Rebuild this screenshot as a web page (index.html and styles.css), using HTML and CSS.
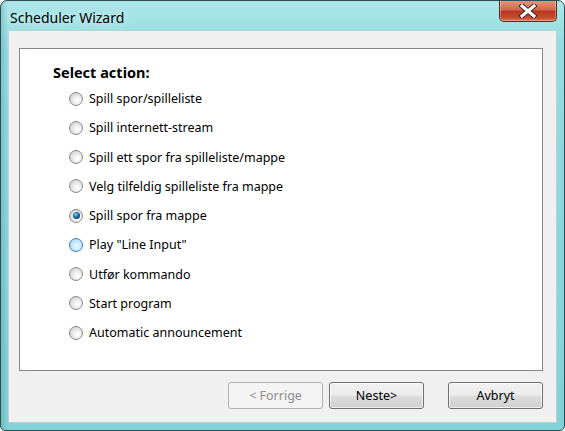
FILE: index.html
```html
<!DOCTYPE html>
<html lang="no">
<head>
  <meta charset="UTF-8">
  <title>Scheduler Wizard</title>
  <link rel="stylesheet" href="styles.css">
</head>
<body>
  <div class="window">
    <div class="titlebar">
      <span class="title">Scheduler Wizard</span>
      <div class="close">
        <svg width="20" height="14" viewBox="0 0 20 14">
          <path d="M4 2 L16 12 M16 2 L4 12" stroke="#3a2a28" stroke-width="5" stroke-linecap="square"/>
          <path d="M4 2 L16 12 M16 2 L4 12" stroke="#ffffff" stroke-width="3" stroke-linecap="square"/>
        </svg>
      </div>
    </div>

    <div class="client">
      <div class="panel">
        <h2 class="heading">Select action:</h2>
        <ul class="options">
          <li class="option"><span class="radio"></span>Spill spor/spilleliste</li>
          <li class="option"><span class="radio"></span>Spill internett-stream</li>
          <li class="option"><span class="radio"></span>Spill ett spor fra spilleliste/mappe</li>
          <li class="option"><span class="radio"></span>Velg tilfeldig spilleliste fra mappe</li>
          <li class="option"><span class="radio checked"></span>Spill spor fra mappe</li>
          <li class="option"><span class="radio hover"></span>Play "Line Input"</li>
          <li class="option"><span class="radio"></span>Utfør kommando</li>
          <li class="option"><span class="radio"></span>Start program</li>
          <li class="option"><span class="radio"></span>Automatic announcement</li>
        </ul>
      </div>

      <div class="buttons">
        <button class="btn" disabled>&lt; Forrige</button>
        <button class="btn">Neste&gt;</button>
        <button class="btn cancel">Avbryt</button>
      </div>
    </div>
  </div>
</body>
</html>
```

FILE: styles.css
```css
* {
  margin: 0;
  padding: 0;
  box-sizing: border-box;
}

body {
  font-family: 'Noto Sans', 'Open Sans', sans-serif;
  background: #ffffff;
  color: #000;
}

.window {
  position: relative;
  width: 565px;
  height: 431px;
  border: 1px solid #2f4c52;
  border-radius: 7px 7px 5px 5px;
  padding: 0 7px 7px 7px;
  display: flex;
  flex-direction: column;
  background:
    linear-gradient(90deg, rgba(70, 150, 158, 0.35) 0px, rgba(255, 255, 255, 0) 7px),
    linear-gradient(180deg, #ace6e8 0%, #95dde0 10%, #88d6da 60%, #80d2d6 100%);
  overflow: hidden;
}

.titlebar {
  height: 29px;
  display: flex;
  align-items: center;
  padding-left: 2px;
  padding-top: 3px;
}

.title {
  font-size: 14px;
  color: #000;
  text-shadow: 0 0 8px rgba(255, 255, 255, 0.9);
}

.close {
  position: absolute;
  top: -1px;
  right: 7px;
  width: 58px;
  height: 22px;
  border: 1px solid #5a2a22;
  border-top: none;
  border-radius: 0 0 5px 5px;
  background: linear-gradient(180deg, #e39a84 0%, #d06a4e 45%, #b8381f 55%, #c64c2e 85%, #d9795a 100%);
  box-shadow: inset 0 0 0 1px rgba(255, 255, 255, 0.3);
  display: flex;
  align-items: center;
  justify-content: center;
}

.client {
  flex: 1;
  background: #f0f0f0;
  border: 1px solid #b7d3d6;
  padding: 17px 13px 13px 10px;
  display: flex;
  flex-direction: column;
}

.panel {
  height: 323px;
  background: #ffffff;
  border: 1px solid #828790;
  padding: 15px 0 0 33px;
}

.heading {
  font-size: 14.5px;
  font-weight: 700;
  line-height: 16px;
}

.options {
  list-style: none;
  margin-top: 4px;
  padding-left: 16px;
}

.option {
  height: 29.25px;
  display: flex;
  align-items: center;
  gap: 6px;
  font-size: 12.5px;
}

.radio {
  width: 14px;
  height: 14px;
  border-radius: 50%;
  border: 1px solid #8a8b8b;
  background: radial-gradient(circle at 62% 62%, #ffffff 0%, #eeeeee 35%, #c4c4c4 100%);
  display: flex;
  align-items: center;
  justify-content: center;
  flex-shrink: 0;
}

.radio.checked::after {
  content: "";
  width: 7px;
  height: 7px;
  border-radius: 50%;
  background: radial-gradient(circle at 40% 35%, #8fd0f5 0%, #2b7fb8 35%, #0d3a5e 75%, #082238 100%);
}

.radio.hover {
  border-color: #3c7fb1;
  background: radial-gradient(circle at 60% 60%, #eaf7ff 0%, #c9e9fb 45%, #8fcdf0 100%);
}

.buttons {
  margin-top: 11px;
  display: flex;
  justify-content: flex-end;
  gap: 6px;
}

.btn {
  width: 95px;
  height: 27px;
  font-family: 'Noto Sans', 'Open Sans', sans-serif;
  font-size: 12.5px;
  color: #000;
  border: 1px solid #707070;
  border-radius: 3px;
  background: linear-gradient(180deg, #f2f2f2 0%, #ebebeb 48%, #dddddd 52%, #cfcfcf 100%);
  box-shadow: inset 0 0 0 1px rgba(255, 255, 255, 0.7);
}

.btn:disabled {
  color: #8d8d8d;
  border-color: #adb2b5;
  background: #f4f4f4;
  box-shadow: none;
}

.btn.cancel {
  margin-left: 18px;
}
```
